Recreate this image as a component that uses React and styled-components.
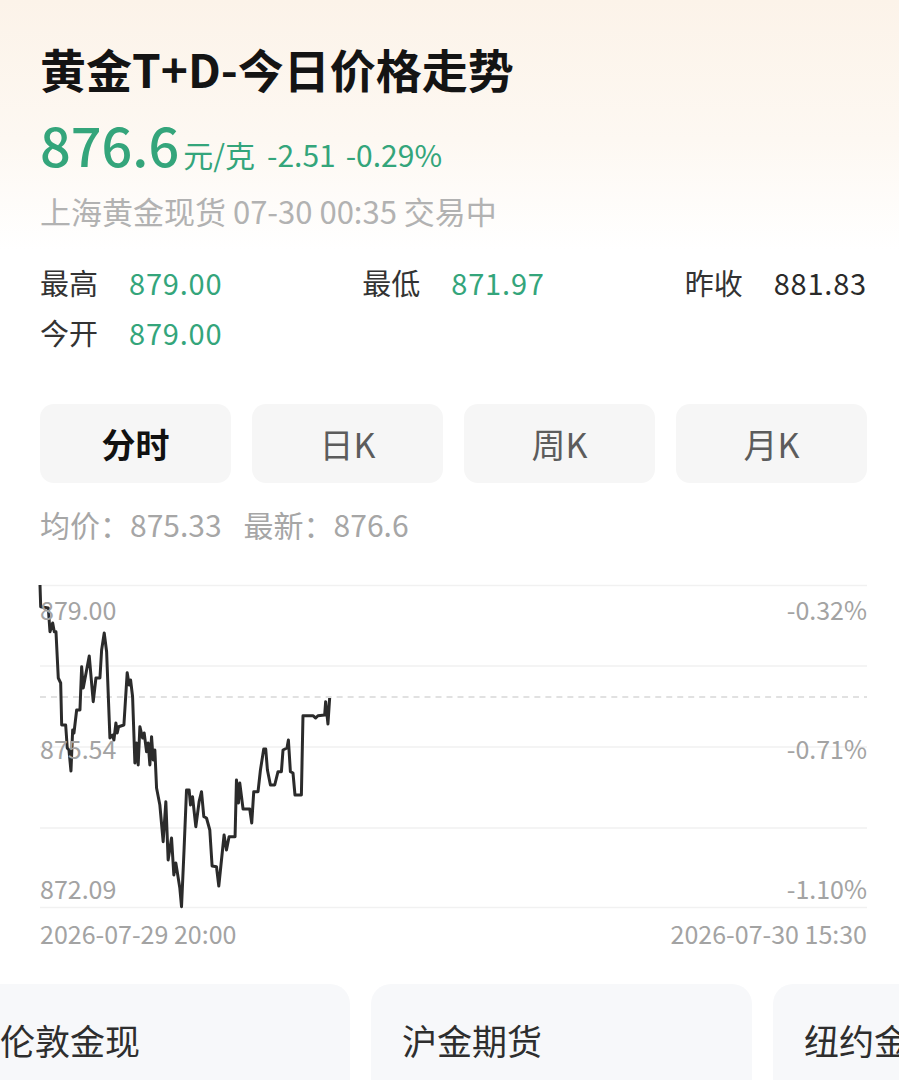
import React, { useLayoutEffect, useRef } from "react";
import styled, { createGlobalStyle } from "styled-components";

const GREEN = "#34a57b";

const GlobalStyle = createGlobalStyle`
  body {
    margin: 0;
    background: #fff;
    font-family: "Noto Sans CJK SC", "Noto Sans", sans-serif;
    color: #222;
  }
`;

const Page = styled.div`
  width: 899px;
  overflow: hidden;
  background: linear-gradient(180deg, #fcf3e9 0px, #fdf8f2 140px, #ffffff 250px);
`;

const Inner = styled.div`
  padding: 36px 32px 0 40px;
`;

const Title = styled.h1`
  margin: 0;
  font-size: 46px;
  line-height: 64px;
  font-weight: 700;
  color: #141414;
`;

const PriceRow = styled.div`
  display: flex;
  align-items: baseline;
  margin-top: 14px;
  color: ${GREEN};
`;

const BigPrice = styled.span`
  font-size: 54px;
  line-height: 60px;
  font-weight: 500;
  margin-right: 4px;
`;

const Change = styled.span`
  font-size: 30px;
  line-height: 40px;
  margin-right: ${(p) => p.$gap || 0}px;
`;

const Sub = styled.div`
  margin-top: 17px;
  font-size: 31px;
  line-height: 40px;
  color: #b2b2b2;
`;

const Stats = styled.div`
  display: grid;
  grid-template-columns: repeat(3, auto);
  justify-content: space-between;
  margin-top: 26px;
`;

const Stat = styled.div`
  display: flex;
  align-items: center;
  height: 50px;
  font-size: 29px;
`;

const StatLabel = styled.span`
  color: #333;
  margin-right: 31px;
`;

const StatValue = styled.span`
  color: ${(p) => (p.$plain ? "#2a2a2a" : GREEN)};
  letter-spacing: 0.8px;
`;

const Tabs = styled.div`
  display: grid;
  grid-template-columns: repeat(4, 1fr);
  gap: 21px;
  margin-top: 47px;
`;

const Tab = styled.div`
  height: 79px;
  border-radius: 14px;
  background: #f6f6f6;
  display: flex;
  align-items: center;
  justify-content: center;
  font-size: 34px;
  font-weight: ${(p) => (p.$active ? 700 : 400)};
  color: ${(p) => (p.$active ? "#111" : "#5c5c5c")};
`;

const AvgRow = styled.div`
  display: flex;
  gap: 22px;
  margin-top: 21px;
  font-size: 30px;
  line-height: 40px;
  color: #a6a6a6;
`;

const Chart = styled.div`
  position: relative;
  height: 323px;
  margin-top: 41px;
`;

const ChartSvg = styled.svg`
  display: block;
  width: 100%;
  height: 100%;
  overflow: visible;
`;

const AxisLabel = styled.span`
  position: absolute;
  top: ${(p) => p.$top}px;
  ${(p) => (p.$right ? "right: 0;" : "left: 0;")}
  font-size: 25px;
  line-height: 30px;
  color: #a3a3a3;
`;

const DateRow = styled.div`
  display: flex;
  justify-content: space-between;
  margin-top: 10px;
  font-size: 25px;
  line-height: 30px;
  color: #a3a3a3;
`;

const CardTrack = styled.div`
  display: flex;
  gap: 21px;
  margin-top: 36px;
  padding-left: 40px;
  overflow-x: auto;
  scrollbar-width: none;
  &::-webkit-scrollbar {
    display: none;
  }
`;

const Card = styled.div`
  flex: 0 0 381px;
  height: 180px;
  box-sizing: border-box;
  padding: 34px 31px 0;
  border-radius: 20px;
  background: #f7f8fa;
  font-size: 35px;
  line-height: 44px;
  color: #2e2e2e;
`;

// page coords of the intraday line, traced from the screen
const POINTS = [
  [40, 585], [40.7, 606.7], [48.3, 608], [50, 631.7], [52.7, 623], [54.3, 631.7],
  [56, 631.7], [58.3, 678], [60.7, 683], [61.7, 725], [65.7, 725], [67.3, 748],
  [69, 750], [71, 771], [72.7, 730], [74, 733], [76.7, 710], [80, 710],
  [81.7, 666.7], [83.3, 688], [89.3, 656], [93.3, 701.7], [96, 678], [100, 678],
  [101.7, 650], [104.3, 633], [106.7, 651.7], [110, 738], [112.7, 735], [114, 740],
  [116, 723], [117.3, 733], [118.7, 726.7], [124, 725], [127.3, 672.7], [129.3, 685],
  [130.7, 680], [132.7, 696.7], [135, 763], [136.7, 743], [138.3, 765], [140, 726.7],
  [142.7, 738], [144.3, 733], [146.7, 751.7], [148.3, 743], [150, 765], [151.7, 736.7],
  [153.3, 760], [155, 750], [156.7, 788], [160, 805], [163.3, 841.7], [166, 801.7],
  [168.3, 860], [171.7, 838], [174, 875], [176, 863], [180, 888], [181.7, 906.7],
  [184.3, 848], [186.7, 790], [189.3, 790], [190.7, 805], [192.7, 796.7], [196, 826.7],
  [199.3, 801.7], [201.7, 791.7], [204, 816.7], [206.7, 818], [210, 830], [212.3, 866],
  [216.7, 866.7], [219, 886], [224.3, 835], [226.7, 850], [229.3, 836.7], [235.3, 836.7],
  [236.7, 780], [238.7, 803], [240, 783], [243.3, 809], [250, 809], [252, 823],
  [254, 791.7], [258.3, 791.7], [260.7, 770], [264, 749], [266, 749], [267.7, 770],
  [270.7, 785], [275, 785], [278.3, 771.7], [281.7, 771.7], [283.3, 750], [287.3, 748],
  [288.7, 740], [290.7, 771.7], [293.3, 773], [295.3, 795], [301.7, 795], [303.3, 715.7],
  [313.3, 715.7], [316, 718], [318.3, 715.7], [325, 715], [326, 701.7], [328.3, 724],
  [330, 698],
];

const GRID = [0.5, 81, 162, 243, 322.5];

const stats = [
  { label: "最高", value: "879.00" },
  { label: "最低", value: "871.97" },
  { label: "昨收", value: "881.83", plain: true },
  { label: "今开", value: "879.00" },
];

const tabs = ["分时", "日K", "周K", "月K"];
const markets = ["伦敦金现", "沪金期货", "纽约金"];

const PriceChart = () => {
  const line = POINTS.map(([x, y]) => `${(x - 40).toFixed(1)},${(y - 585).toFixed(1)}`).join(" ");
  return (
    <Chart>
      <ChartSvg viewBox="0 0 828 323" preserveAspectRatio="none">
        {GRID.map((y) => (
          <line key={y} x1="0" x2="828" y1={y} y2={y} stroke="#f1f1f1" strokeWidth="1.5" />
        ))}
        <line x1="0" x2="828" y1="112" y2="112" stroke="#c4c4c4" strokeWidth="1.2" strokeDasharray="6 5" />
        <polyline points={line} fill="none" stroke="#2b2b2b" strokeWidth="3" strokeLinejoin="round" />
      </ChartSvg>
      <AxisLabel $top={9}>879.00</AxisLabel>
      <AxisLabel $top={148}>875.54</AxisLabel>
      <AxisLabel $top={288}>872.09</AxisLabel>
      <AxisLabel $top={9} $right>-0.32%</AxisLabel>
      <AxisLabel $top={148} $right>-0.71%</AxisLabel>
      <AxisLabel $top={288} $right>-1.10%</AxisLabel>
    </Chart>
  );
};

const App = () => {
  const trackRef = useRef(null);

  useLayoutEffect(() => {
    if (trackRef.current) trackRef.current.scrollLeft = 71;
  }, []);

  return (
    <Page>
      <GlobalStyle />
      <Inner>
        <Title>黄金T+D-今日价格走势</Title>
        <PriceRow>
          <BigPrice>876.6</BigPrice>
          <Change $gap={12}>元/克</Change>
          <Change $gap={10}>-2.51</Change>
          <Change>-0.29%</Change>
        </PriceRow>
        <Sub>上海黄金现货 07-30 00:35 交易中</Sub>
        <Stats>
          {stats.map((s) => (
            <Stat key={s.label}>
              <StatLabel>{s.label}</StatLabel>
              <StatValue $plain={s.plain}>{s.value}</StatValue>
            </Stat>
          ))}
        </Stats>
        <Tabs>
          {tabs.map((t, i) => (
            <Tab key={t} $active={i === 0}>
              {t}
            </Tab>
          ))}
        </Tabs>
        <AvgRow>
          <span>均价：875.33</span>
          <span>最新：876.6</span>
        </AvgRow>
        <PriceChart />
        <DateRow>
          <span>2026-07-29 20:00</span>
          <span>2026-07-30 15:30</span>
        </DateRow>
      </Inner>
      <CardTrack ref={trackRef}>
        {markets.map((m) => (
          <Card key={m}>{m}</Card>
        ))}
      </CardTrack>
    </Page>
  );
};

export default App;
